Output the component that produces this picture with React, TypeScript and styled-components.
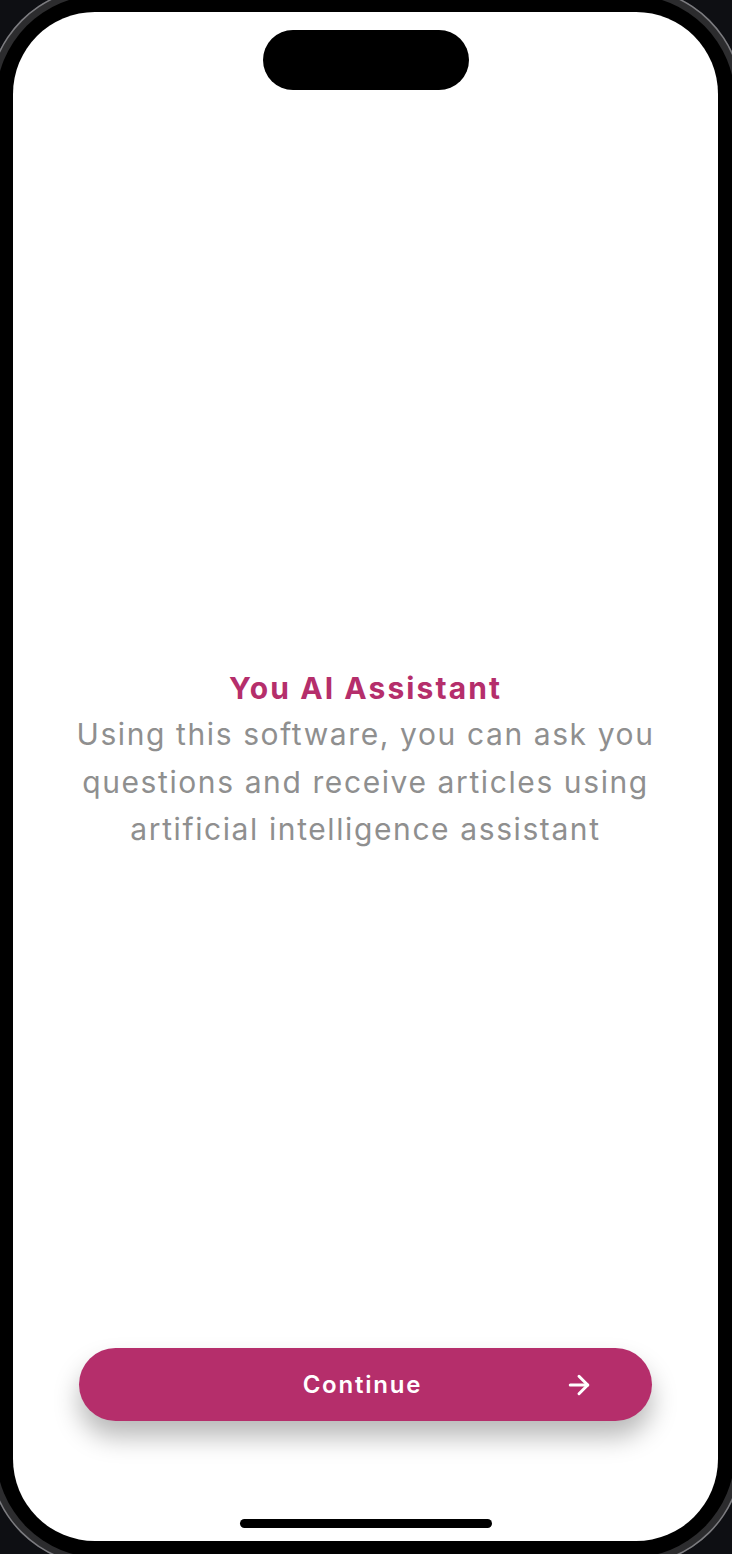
import styled, { createGlobalStyle } from "styled-components"
import { ArrowRight } from "lucide-react"

const GlobalStyle = createGlobalStyle`
  html, body {
    margin: 0;
    padding: 0;
    overflow: hidden;
    background: #0e0f13;
  }
  * {
    box-sizing: border-box;
  }
`

const accent = "#b52e6b"

const PhoneBody = styled.div`
  margin: -13px 0 0 -12px;
  width: 755px;
  height: 1579px;
  border-radius: 113px;
  padding: 8px;
  background: #2c2c2e;
  box-shadow: inset 0 0 0 1.5px #7c7c80;
`

const Bezel = styled.div`
  height: 100%;
  border-radius: 105px;
  padding: 17px;
  background: #000;
`

const Screen = styled.main`
  height: 100%;
  border-radius: 82px;
  background: #fff;
  display: flex;
  flex-direction: column;
  align-items: center;
  overflow: hidden;
  font-family: Inter, Roboto, "Noto Sans", sans-serif;
`

const Island = styled.div`
  margin-top: 18px;
  width: 206px;
  height: 60px;
  border-radius: 30px;
  background: #000;
  flex-shrink: 0;
`

const Content = styled.section`
  flex: 1;
  width: 100%;
  display: flex;
  flex-direction: column;
  align-items: center;
  justify-content: center;
  padding: 84px 10px 0;
  text-align: center;
`

const Title = styled.h1`
  margin: 0;
  font-size: 30px;
  line-height: 40px;
  font-weight: 700;
  color: ${accent};
  letter-spacing: 2.1px;
`

const Description = styled.p`
  margin: 3px 0 0;
  font-size: 30px;
  line-height: 47.5px;
  font-weight: 400;
  color: #8f8f8f;
  letter-spacing: 1.6px;
`

const ContinueButton = styled.button`
  width: 573px;
  height: 73px;
  flex-shrink: 0;
  border: none;
  border-radius: 37px;
  background: ${accent};
  color: #fff;
  display: grid;
  grid-template-columns: 1fr auto 1fr;
  align-items: center;
  padding: 0 58px 0 52px;
  box-shadow: 0 16px 26px rgba(0, 0, 0, 0.28);
  font-family: inherit;
  cursor: pointer;
`

const ButtonLabel = styled.span`
  grid-column: 2;
  font-size: 24px;
  font-weight: 600;
  letter-spacing: 1.8px;
`

const ButtonIcon = styled.span`
  grid-column: 3;
  justify-self: end;
  display: flex;
`

const HomeIndicator = styled.div`
  margin: 98px 0 13px;
  width: 252px;
  height: 9px;
  border-radius: 5px;
  background: #000;
  flex-shrink: 0;
`

export default function App() {
  return (
    <>
      <GlobalStyle />
      <PhoneBody>
        <Bezel>
          <Screen>
            <Island />
            <Content>
              <Title>You AI Assistant</Title>
              <Description>
                Using this software, you can ask you
                <br />
                questions and receive articles using
                <br />
                artificial intelligence assistant
              </Description>
            </Content>
            <ContinueButton type="button">
              <ButtonLabel>Continue</ButtonLabel>
              <ButtonIcon>
                <ArrowRight size={30} strokeWidth={2.4} />
              </ButtonIcon>
            </ContinueButton>
            <HomeIndicator />
          </Screen>
        </Bezel>
      </PhoneBody>
    </>
  )
}
